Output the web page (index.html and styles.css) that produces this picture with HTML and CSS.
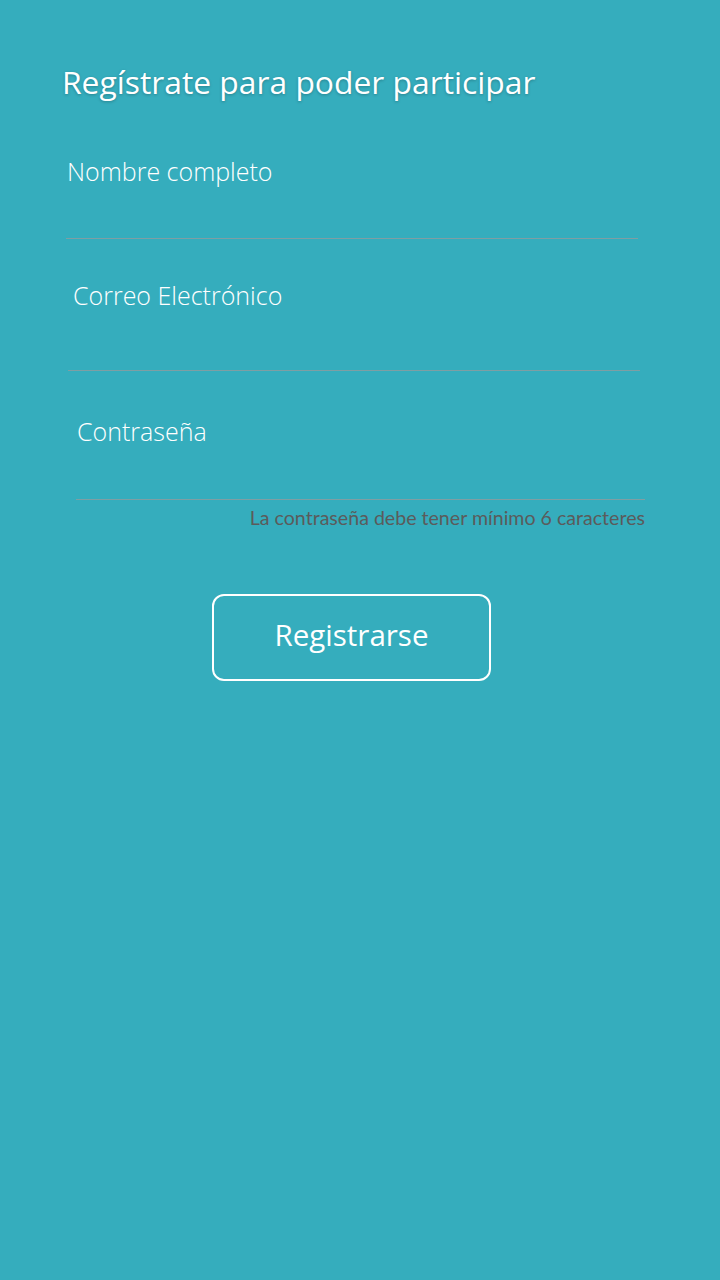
FILE: index.html
```html
<!DOCTYPE html>
<html lang="es">
<head>
<meta charset="utf-8">
<link rel="stylesheet" href="styles.css">
</head>
<body>
<main class="page">
  <h1 class="title">Regístrate para poder participar</h1>
  <div class="field field-name">
    <div class="label">Nombre completo</div>
    <div class="line"></div>
  </div>
  <div class="field field-mail">
    <div class="label">Correo Electrónico</div>
    <div class="line"></div>
  </div>
  <div class="field field-pass">
    <div class="label">Contraseña</div>
    <div class="line"></div>
  </div>
  <p class="hint">La contraseña debe tener mínimo 6 caracteres</p>
  <div class="actions">
    <button class="btn">Registrarse</button>
  </div>
</main>
</body>
</html>
```
FILE: styles.css
```css
html, body {
  margin: 0;
  padding: 0;
  background: #35adbd;
  height: 100%;
}
.page {
  width: 720px;
  min-height: 1280px;
  box-sizing: border-box;
  padding-top: 60px;
  font-family: "Open Sans", "Noto Sans", sans-serif;
  color: #ffffff;
}
.title {
  margin: 0 0 0 62px;
  font-size: 31.8px;
  font-weight: 400;
  line-height: 44px;
  height: 44px;
  text-shadow: 0 1px 3px rgba(0,0,0,0.25);
}
.field {
  display: flex;
  flex-direction: column;
}
.label {
  font-size: 25px;
  line-height: 32px;
  height: 32px;
  font-weight: 300;
}
.line {
  height: 0;
  border-top: 1px solid #7f9ea3;
}
.field-name { margin: 51px 82px 0 67px; }
.field-name .line { margin: 51px 0 0 -1px; }
.field-mail { margin: 40px 80px 0 73px; }
.field-mail .line { margin: 59px 0 0 -5px; }
.field-pass { margin: 44px 75px 0 77px; }
.field-pass .line { margin: 52px 0 0 -1px; }
.hint {
  margin: 7px 75px 0 0;
  text-align: right;
  font-family: "Lato", "Liberation Sans", sans-serif;
  font-size: 19.6px;
  line-height: 22px;
  height: 22px;
  color: #5b5b5b;
}
.actions {
  display: flex;
  padding-left: 212px;
  margin-top: 65px;
}
.btn {
  width: 279px;
  height: 87px;
  box-sizing: border-box;
  border: 2px solid #ffffff;
  border-radius: 12px;
  background: transparent;
  color: #ffffff;
  font-family: "Open Sans", "Noto Sans", sans-serif;
  font-size: 29.5px;
  padding: 0 0 6px;
}
```
